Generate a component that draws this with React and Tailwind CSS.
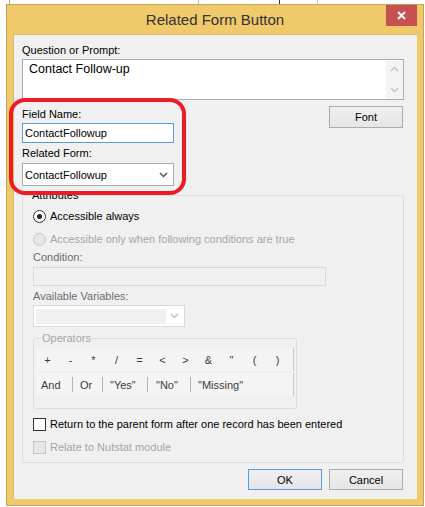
import React from "react";

const ops = ["+", "-", "*", "/", "=", "<", ">", "&", '"', "(", ")"];

function Chevron({ color = "#444" }) {
  return (
    <svg width="9" height="6" viewBox="0 0 9 6">
      <path d="M1 1 L4.5 4.5 L8 1" fill="none" stroke={color} strokeWidth="1.5" />
    </svg>
  );
}

function Radio({ checked, disabled, children }) {
  return (
    <div className="flex items-center h-[16px] gap-[4px]">
      <span
        className={
          disabled
            ? "w-[13px] h-[13px] rounded-full border border-[#c6c6c6] bg-[#e6e6e6]"
            : "w-[13px] h-[13px] rounded-full border border-[#333] bg-white flex items-center justify-center"
        }
      >
        {checked && <span className="w-[5px] h-[5px] rounded-full bg-[#222]" />}
      </span>
      <span className={disabled ? "text-[#a6a6a6]" : "text-black"}>{children}</span>
    </div>
  );
}

function Check({ disabled, children }) {
  return (
    <div className="flex items-center h-[16px] gap-[4px]">
      <span
        className={
          disabled
            ? "w-[13px] h-[13px] border border-[#c6c6c6] bg-[#e6e6e6]"
            : "w-[13px] h-[13px] border border-[#333] bg-white"
        }
      />
      <span className={disabled ? "text-[#a6a6a6]" : "text-black"}>{children}</span>
    </div>
  );
}

function Legend({ children, className }) {
  return (
    <span className={"absolute top-[-9px] px-[1px] leading-[16px] bg-[#f0f0f0] " + className}>
      {children}
    </span>
  );
}

export default function App() {
  return (
    <div className="relative w-[425px] h-[507px] bg-white overflow-hidden font-['Liberation_Sans',Arial,sans-serif] text-[11px] leading-[16px] text-black">
      {/* window behind the dialog */}
      <div className="flex h-[4px]">
        <div className="ml-[9px] w-px bg-[#a8a8a8]" />
        <div className="ml-[188px] w-px bg-[#bdbdbd]" />
        <div className="ml-[80px] w-px bg-[#333]" />
        <div className="ml-[37px] w-px bg-[#cfcfcf]" />
      </div>

      <div className="ml-[6px] w-[418px] h-[502px] border border-[#c6a352] bg-[#f0c96b] flex flex-col">
        {/* Title bar */}
        <div className="h-[29px] grid grid-cols-[1fr_auto_1fr] items-center">
          <div />
          <div className="text-[15px] text-[#333] leading-[20px]">Related Form Button</div>
          <div className="flex justify-end self-start">
            <div className="w-[31px] h-[21px] mr-[6px] bg-[#c75050] flex items-center justify-center">
              <svg width="9" height="9" viewBox="0 0 9 9">
                <path d="M1 1 L8 8 M8 1 L1 8" stroke="white" strokeWidth="2" />
              </svg>
            </div>
          </div>
        </div>

        {/* Client area */}
        <div className="mx-[6px] h-[465px] bg-[#f0f0f0] shadow-[inset_1px_1px_0_#d8bb70] pl-[9px] pr-[13px] pt-[8px] flex flex-col">
          <div className="h-[16px]">Question or Prompt:</div>
          <div className="mt-[1px] h-[41px] border border-[#abadb3] bg-white flex">
            <div className="flex-1 pl-[6px] pt-[1px] text-[12.5px] leading-[16px]">Contact Follow-up</div>
            <div className="w-[17px] bg-[#f4f4f4] flex flex-col justify-between items-center py-[6px]">
              <svg width="9" height="6" viewBox="0 0 9 6">
                <path d="M1 5 L4.5 1.5 L8 5" fill="none" stroke="#c2c2c2" strokeWidth="1.5" />
              </svg>
              <Chevron color="#c2c2c2" />
            </div>
          </div>

          <div className="mt-[6px] flex items-start">
            <div className="w-[152px] flex flex-col">
              <div className="h-[16px]">Field Name:</div>
              <div className="mt-[1px] h-[20px] border border-[#569de5] bg-white pl-[2px] leading-[18px]">
                ContactFollowup
              </div>
              <div className="mt-[2px] h-[16px]">Related Form:</div>
              <div className="mt-[2px] h-[23px] border border-[#acacac] bg-white pl-[2px] pr-[5px] flex items-center justify-between">
                <span>ContactFollowup</span>
                <Chevron color="#555" />
              </div>
            </div>
            <div className="ml-auto mr-[1px] w-[74px] h-[22px] border border-[#acacac] bg-gradient-to-b from-[#f0f0f0] to-[#e5e5e5] flex items-center justify-center">
              Font
            </div>
          </div>

          {/* Attributes group */}
          <div className="relative mt-[9px] border border-[#dcdcdc] rounded-[3px] pl-[10px] pb-[7px] flex flex-col">
            <Legend className="left-[8px] text-black">Attributes</Legend>
            <div className="mt-[12px]">
              <Radio checked>Accessible always</Radio>
            </div>
            <div className="mt-[7px]">
              <Radio disabled>Accessible only when following conditions are true</Radio>
            </div>
            <div className="mt-[2px] h-[16px] text-[#6d6d6d]">Condition:</div>
            <div className="mt-[2px] w-[293px] h-[19px] border border-[#d9d9d9] bg-[#f0f0f0]" />
            <div className="mt-[2px] h-[16px] text-[#6d6d6d]">Available Variables:</div>
            <div className="mt-[1px] w-[152px] h-[22px] border border-[#d9d9d9] bg-white flex items-center pl-[2px] pr-[5px] justify-between">
              <div className="w-[130px] h-[15px] bg-[#f0f0f0]" />
              <Chevron color="#c2c2c2" />
            </div>

            {/* Operators */}
            <div className="relative mt-[11px] w-[264px] h-[71px] border border-[#dcdcdc] rounded-[3px] pl-[2px] pt-[9px] flex flex-col">
              <Legend className="left-[7px] text-[#a6a6a6]">Operators</Legend>
              <div className="w-[258px] h-[23px] bg-[#f4f4f4] border-r border-[#c8c8c8] flex items-center text-[#3c3c3c]">
                {ops.map((o, i) => (
                  <span key={i} className="w-[23px] text-center">
                    {o}
                  </span>
                ))}
              </div>
              <div className="mt-[2px] w-[258px] h-[23px] bg-[#f4f4f4] border-r border-[#c8c8c8] flex items-center text-[#3c3c3c]">
                <span className="w-[36px] pl-[5px]">And</span>
                <span className="w-px h-[15px] bg-[#b4b4b4]" />
                <span className="w-[29px] pl-[7px]">Or</span>
                <span className="w-px h-[15px] bg-[#b4b4b4]" />
                <span className="w-[44px] pl-[7px]">"Yes"</span>
                <span className="w-px h-[15px] bg-[#b4b4b4]" />
                <span className="w-[42px] pl-[8px]">"No"</span>
                <span className="w-px h-[15px] bg-[#b4b4b4]" />
                <span className="pl-[7px]">"Missing"</span>
              </div>
            </div>

            <div className="mt-[7px]">
              <Check>Return to the parent form after one record has been entered</Check>
            </div>
            <div className="mt-[7px]">
              <Check disabled>Relate to Nutstat module</Check>
            </div>
          </div>

          <div className="mt-[6px] pr-[1px] flex justify-end gap-[7px]">
            <div className="w-[74px] h-[21px] border border-[#569de5] bg-gradient-to-b from-[#f0f0f0] to-[#e5e5e5] flex items-center justify-center">
              OK
            </div>
            <div className="w-[74px] h-[21px] border border-[#acacac] bg-gradient-to-b from-[#f0f0f0] to-[#e5e5e5] flex items-center justify-center">
              Cancel
            </div>
          </div>
        </div>
      </div>

      {/* red highlight drawn over the dialog */}
      <div className="absolute left-[9px] top-[98px] w-[177px] h-[97px] border-[4px] border-[#ed1c24] rounded-[16px] pointer-events-none" />
    </div>
  );
}
